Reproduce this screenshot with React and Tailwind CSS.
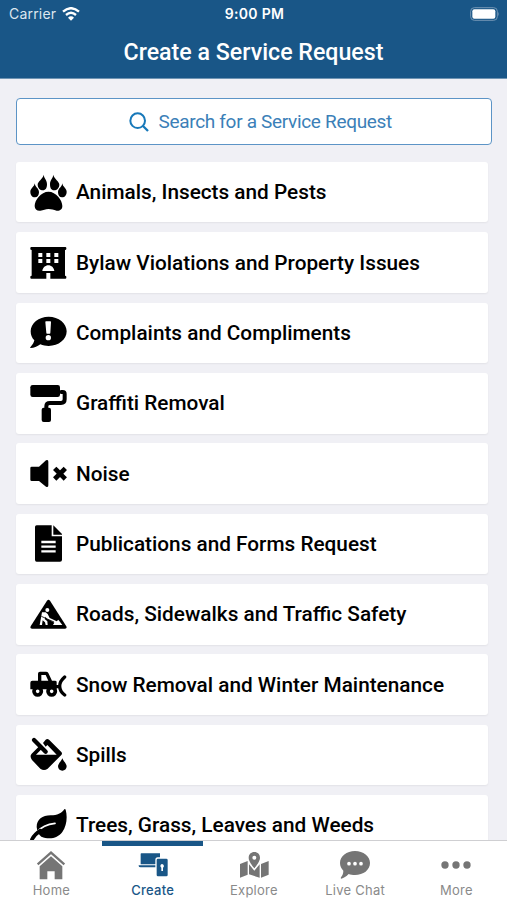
import React from "react";

function Glyph({ children }) {
  return (
    <svg viewBox="0 0 111 111" className="h-[37px] w-[37px] shrink-0" fill="#000">
      {children}
    </svg>
  );
}

const stroke = { fill: "none", stroke: "#000", strokeLinecap: "round", strokeLinejoin: "round" };

const Paw = () => (
  <Glyph>
    <path d="M55.5 53C78 53 97 78 97 96C97 107 89 111 80 110C70 108 65 105 55.5 105C46 105 41 109 31 110C21 111 14 106 14 96C14 78 33 53 55.5 53Z" />
    <path d="M41 2C42 13 51 17 51 31C51 42 47 49 39 49C30 49 23 41 23 32C23 22 38 16 41 2Z" />
    <path d="M70 2C69 13 60 17 60 31C60 42 64 49 72 49C81 49 88 41 88 32C88 22 73 16 70 2Z" />
    <path d="M14 28C15 39 27 43 27 55C27 64 22 70 15 70C6 70 1 62 1 53C1 43 13 39 14 28Z" />
    <path d="M97 28C96 39 84 43 84 55C84 64 89 70 96 70C105 70 110 62 110 53C110 43 98 39 97 28Z" />
  </Glyph>
);

const Hotel = () => (
  <Glyph>
    <path fillRule="evenodd" d="M4 9H106Q109 9 109 12V15Q109 18 105 18V95Q109 95 109 98V101Q109 104 106 104H61V87H49V104H4Q1 104 1 101V98Q1 95 5 95V18Q1 18 1 15V12Q1 9 4 9ZM25 27V39H37V27ZM49 27V39H61V27ZM73 27V39H85V27ZM25 45V57H37V45ZM49 45V57H61V45ZM73 45V57H85V45ZM37 81H73C72 71 64 64 55 64C46 64 38 71 37 81Z" />
  </Glyph>
);

const Complaint = () => (
  <Glyph>
    <path d="M56 8C86 8 110 28 110 52C110 76 86 96 56 96C47 96 39 95 31 91C22 98 11 102 2 102C0 102 0 100 2 98C8 92 12 85 13 79C6 72 2 63 2 52C2 28 26 8 56 8Z" />
    <path fill="#fff" d="M46 24Q46 22 48 22H61Q63 22 63 24L61 57Q61 59 59 59H51Q49 59 49 57Z" />
    <circle cx="55" cy="71" r="8" fill="#fff" />
  </Glyph>
);

const Roller = () => (
  <Glyph>
    <rect x="1" y="0" width="89" height="36" rx="7" />
    <path d="M94 21H98Q104 21 104 27V43Q104 54 93 54H60Q49 54 49 64V72" {...stroke} strokeWidth="12" />
    <rect x="35" y="68" width="28" height="43" rx="6" />
  </Glyph>
);

const Mute = () => (
  <Glyph>
    <path d="M5 35H27L48 16Q55 12 55 20V91Q55 99 48 95L27 78H5Q1 78 1 74V39Q1 35 5 35Z" />
    <path d="M79 45L101 67M101 45L79 67" {...stroke} strokeLinecap="square" strokeWidth="14" />
  </Glyph>
);

const Document = () => (
  <Glyph>
    <path d="M20 1H65V34H96V104Q96 110 90 110H20Q15 110 15 104V6Q15 1 20 1Z" />
    <path d="M70 1L96 27V29H70Z" />
    <path d="M34 51H77M34 65H77M34 79H77" stroke="#fff" strokeWidth="7" />
  </Glyph>
);

const Roadwork = () => (
  <Glyph>
    <path d="M51 14Q55.5 8 60 14L109 91Q112 98 105 98H6Q-1 98 2 91Z" />
    <circle cx="52" cy="42" r="6" fill="#fff" />
    <path fill="#fff" d="M36 49L47 49L53 54L59 66L66 69L80 76L85 71L97 87H69L73 80L58 72L50 68L47 62L44 69L52 76L53 87H47L45 79L38 73L36 87H29L33 65Z" />
    <path d="M34 61L72 78" stroke="#000" strokeWidth="2.5" />
  </Glyph>
);

const Plow = () => (
  <Glyph>
    <path fillRule="evenodd" d="M24 44V23Q24 17 30 17H48Q53 17 55 21L66 44H75Q80 44 80 48V70H1V50Q1 44 7 44ZM34 27V44H55L47 27Z" />
    <circle cx="23" cy="76" r="11" fill="#fff" stroke="#000" strokeWidth="11" />
    <circle cx="65" cy="76" r="11" fill="#fff" stroke="#000" strokeWidth="11" />
    <path d="M78 62H88M104 33Q89 46 89 60Q89 76 104 87" {...stroke} strokeWidth="10" />
  </Glyph>
);

const Spill = () => (
  <Glyph>
    <path fillRule="evenodd" d="M47 11Q52 6 58 12L94 48Q98 53 94 57L53 98Q42 106 31 98L6 72Q-2 61 5 53L29 29L38 36L18 56H80L52 27L47 32L39 21Z" />
    <path d="M12 12L47 47" {...stroke} strokeWidth="13" />
    <path d="M97 67C100 76 110 83 110 91C110 99 104 104 97 104C90 104 84 99 84 91C84 83 94 76 97 67Z" />
  </Glyph>
);

const Leaf = () => (
  <Glyph>
    <path d="M103 7Q105 4 107 8C113 30 110 57 97 75C83 94 58 99 34 89Q22 80 20 60C20 38 37 25 62 25C82 25 94 20 103 7Z" />
    <path d="M20 76C34 59 53 51 75 49" {...stroke} stroke="#fff" strokeWidth="5" />
    <path d="M6 97C12 86 20 78 31 71" {...stroke} strokeWidth="11" />
  </Glyph>
);

const rows = [
  [Paw, "Animals, Insects and Pests"],
  [Hotel, "Bylaw Violations and Property Issues"],
  [Complaint, "Complaints and Compliments"],
  [Roller, "Graffiti Removal"],
  [Mute, "Noise"],
  [Document, "Publications and Forms Request"],
  [Roadwork, "Roads, Sidewalks and Traffic Safety"],
  [Plow, "Snow Removal and Winter Maintenance"],
  [Spill, "Spills"],
  [Leaf, "Trees, Grass, Leaves and Weeds"],
];

const tabs = [
  ["Home", (
    <>
      <path d="M5 43L45 8L85 43" fill="none" stroke="currentColor" strokeWidth="7" />
      <path d="M45 19L79 49V88H56V64H34V88H11V49Z" />
    </>
  )],
  ["Create", (
    <>
      <path d="M10 10H66V22H59Q52 22 52 30V43H8V12Q8 10 10 10ZM2 46H52V52H8Q2 52 2 48Z" />
      <path fillRule="evenodd" d="M60 26H85Q89 26 89 30V75Q89 79 85 79H60Q56 79 56 75V30Q56 26 60 26ZM72 42A6 6 0 0 0 70 53V63H75V53A6 6 0 0 0 72 42Z" />
    </>
  )],
  ["Explore", (
    <>
      <path fillRule="evenodd" d="M46 6C56 6 63 13 63 23C63 34 52 47 46 55C40 47 29 34 29 23C29 13 36 6 46 6ZM46 17A6 6 0 1 0 46 29A6 6 0 1 0 46 17Z" />
      <path d="M3 42L26 33V74L3 83ZM30 43L46 62L62 43V83L30 73ZM66 42L89 33V74L66 83Z" />
    </>
  )],
  ["Live Chat", (
    <>
      <path d="M45 3C70 3 90 19 90 39C90 60 70 75 45 75C38 75 31 74 26 72C19 79 11 85 4 86C2 86 2 84 3 82C8 76 10 69 10 62C4 56 0 48 0 39C0 19 20 3 45 3Z" />
      <g fill="#fff"><circle cx="27" cy="41" r="5.5" /><circle cx="45" cy="41" r="5.5" /><circle cx="63" cy="41" r="5.5" /></g>
    </>
  )],
  ["More", (
    <><circle cx="12" cy="45" r="11" /><circle cx="45" cy="45" r="11" /><circle cx="78" cy="45" r="11" /></>
  )],
];

export default function App() {
  return (
    <div className="flex h-[900px] w-[507px] flex-col overflow-hidden bg-[#f0f0f5] font-['Roboto',sans-serif]">
      <header className="h-[79px] shrink-0 border-b border-[#6f94b3] bg-[#195687] text-white">
        <div className="grid h-[27px] grid-cols-3 items-center pr-[7px] pl-[9px] font-['Inter',sans-serif]">
          <div className="flex items-center gap-[6px] text-[#dde7ef]">
            <span className="text-[14px] tracking-[0.2px]">Carrier</span>
            <svg viewBox="0 0 54 42" className="h-[14px] w-[18px]" fill="none" stroke="#fff" strokeWidth="7">
              <path d="M3 14Q27 -7 51 14M12 24Q27 11 42 24" />
              <path d="M27 28Q32 28 36 32L27 41L18 32Q22 28 27 28Z" fill="#fff" stroke="none" />
            </svg>
          </div>
          <span className="text-center text-[14px] font-semibold tracking-[0.3px] whitespace-nowrap">9:00 PM</span>
          <svg viewBox="0 0 90 42" className="h-[14px] w-[30px] justify-self-end">
            <rect x="2" y="2" width="80" height="38" rx="11" fill="none" stroke="#7195b4" strokeWidth="3" />
            <rect x="7" y="7" width="69" height="28" rx="6" fill="#fff" />
            <path d="M85 14Q90 21 85 28Z" fill="#7195b4" />
          </svg>
        </div>
        <h1 className="pt-[9px] text-center text-[23.2px] leading-[32px] font-medium">Create a Service Request</h1>
      </header>
      <main className="flex min-h-0 flex-1 flex-col overflow-hidden pt-[19.4px] pl-[15.5px]">
        <div className="flex h-[46.6px] w-[476.5px] shrink-0 items-center rounded-[4px] border-[1.5px] border-[#5c94c6] bg-white pl-[112px] text-[#3b7fb8]">
          <svg viewBox="0 0 60 60" className="mr-[10px] h-5 w-5" fill="none" stroke="#1778b9" strokeWidth="6">
            <circle cx="26" cy="26" r="22" />
            <path d="M42 42L57 57" strokeWidth="7" />
          </svg>
          <span className="pt-[1.5px] text-[19px] tracking-[-0.32px] whitespace-nowrap">Search for a Service Request</span>
        </div>
        <div className="flex flex-col gap-[9.85px] pt-[17px]">
          {rows.map(([Icon, label]) => (
            <div key={label} className="flex h-[60.5px] w-[472px] shrink-0 items-center gap-[9px] rounded-[3px] bg-white pl-[14.5px] text-black shadow-[0_1px_2px_rgba(0,0,0,0.06)]">
              <Icon />
              <span className="pt-[1.5px] text-[20.78px] font-medium whitespace-nowrap">{label}</span>
            </div>
          ))}
        </div>
      </main>
      <nav className="grid h-[60px] shrink-0 grid-cols-5 border-t border-[#cfcfd2] bg-white pl-[0.8px]">
        {tabs.map(([label, art]) => {
          const active = label === "Create";
          return (
            <div key={label} className={"flex flex-col items-center border-t-[5px] pt-1 " + (active ? "border-[#195687] text-[#195687]" : "border-transparent text-[#757575]")}>
              <svg viewBox="0 0 90 90" className="h-[30px] w-[30px] shrink-0" fill="currentColor">{art}</svg>
              <span className={"font-['Inter',sans-serif] text-[13px] leading-[20px] tracking-[0.25px] whitespace-nowrap " + (active ? "font-medium" : "text-[#8a8a8a]")}>{label}</span>
            </div>
          );
        })}
      </nav>
    </div>
  );
}
